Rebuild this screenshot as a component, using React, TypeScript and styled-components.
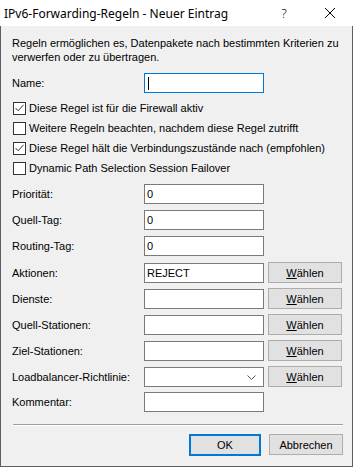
import styled, { createGlobalStyle } from "styled-components";

const GlobalStyle = createGlobalStyle`
  html, body {
    margin: 0;
    padding: 0;
    background: #f0f0f0;
  }
  * {
    box-sizing: border-box;
  }
`;

const StyledWindow = styled.div`
  width: 353px;
  height: 467px;
  display: flex;
  flex-direction: column;
  background: #f0f0f0;
  border: 1px solid #5f5f5f;
  border-top: none;
  font-family: "Liberation Sans", Arial, sans-serif;
  font-size: 11px;
  color: #000;
`;

const StyledTitleBar = styled.div`
  height: 26px;
  flex: 0 0 26px;
  display: flex;
  align-items: center;
  background: #fff;
  margin: 0 -1px;
`;

const StyledTitle = styled.div`
  flex: 1;
  padding-left: 4px;
  font-family: "Noto Sans", "Liberation Sans", sans-serif;
  font-size: 12px;
  white-space: nowrap;
`;

const StyledCaptionButton = styled.div`
  width: 46px;
  height: 26px;
  display: flex;
  align-items: center;
  justify-content: center;
  font-family: "Noto Sans", sans-serif;
  font-weight: 300;
  font-size: 13px;

  svg {
    width: 10px;
    height: 10px;
  }
`;

const StyledBody = styled.div`
  flex: 1;
  display: flex;
  flex-direction: column;
  padding: 10px 10px 0 11px;
`;

const StyledIntro = styled.p`
  margin: 0;
  line-height: 14px;
`;

const StyledRow = styled.div<{ $top: number }>`
  display: grid;
  grid-template-columns: 128px 120px 74px;
  column-gap: 4px;
  align-items: center;
  height: 20px;
  margin-top: ${(p) => p.$top}px;
`;

const StyledLabel = styled.span`
  white-space: nowrap;
`;

const StyledInput = styled.div<{ $focused?: boolean }>`
  height: 20px;
  display: flex;
  align-items: center;
  padding-left: 2px;
  background: #fff;
  border: 1px solid ${(p) => (p.$focused ? "#0078d7" : "#7a7a7a")};
  position: relative;
`;

const StyledCaret = styled.span`
  width: 1px;
  height: 13px;
  background: #000;
  margin-left: 1px;
`;

const StyledChevron = styled.svg`
  position: absolute;
  right: 7px;
  top: 7px;
  width: 9px;
  height: 5px;
`;

const StyledButton = styled.div<{ $default?: boolean }>`
  height: ${(p) => (p.$default ? 22 : 21)}px;
  display: flex;
  align-items: center;
  justify-content: center;
  background: #e1e1e1;
  border: ${(p) => (p.$default ? "2px solid #0078d7" : "1px solid #adadad")};
  white-space: nowrap;

  u {
    text-decoration: underline;
  }
`;

const StyledCheckRow = styled.div<{ $top: number }>`
  display: flex;
  align-items: center;
  gap: 3px;
  height: 20px;
  padding-left: 1px;
  margin-top: ${(p) => p.$top}px;
`;

const StyledCheckbox = styled.span`
  width: 13px;
  height: 13px;
  flex: 0 0 13px;
  background: #fff;
  border: 1px solid #333;
  display: flex;
  align-items: center;
  justify-content: center;

  svg {
    width: 9px;
    height: 8px;
  }
`;

const StyledSeparator = styled.div`
  margin-top: 12px;
  margin-left: 1px;
  width: 330px;
  border-top: 1px solid #a0a0a0;
  border-bottom: 1px solid #fff;
`;

const StyledFooter = styled.div`
  display: grid;
  grid-template-columns: 72px 74px;
  column-gap: 8px;
  justify-content: end;
  align-items: start;
  width: 331px;
  margin-top: 8px;
`;

const CheckItem = ({ label, checked }: { label: string; checked?: boolean }) => (
  <>
    <StyledCheckbox>
      {checked && (
        <svg viewBox="0 0 9 8">
          <path d="M0.5 4 L3.2 6.8 L8.5 0.8" fill="none" stroke="#333" strokeWidth="1" />
        </svg>
      )}
    </StyledCheckbox>
    <span>{label}</span>
  </>
);

const checks = [
  { label: "Diese Regel ist für die Firewall aktiv", checked: true },
  { label: "Weitere Regeln beachten, nachdem diese Regel zutrifft", checked: false },
  { label: "Diese Regel hält die Verbindungszustände nach (empfohlen)", checked: true },
  { label: "Dynamic Path Selection Session Failover", checked: false },
];

const fields = [
  { label: "Priorität:", value: "0" },
  { label: "Quell-Tag:", value: "0" },
  { label: "Routing-Tag:", value: "0" },
  { label: "Aktionen:", value: "REJECT", pick: true },
  { label: "Dienste:", value: "", pick: true },
  { label: "Quell-Stationen:", value: "", pick: true },
  { label: "Ziel-Stationen:", value: "", pick: true },
  { label: "Loadbalancer-Richtlinie:", value: "", pick: true, combo: true },
  { label: "Kommentar:", value: "" },
];

export default function App() {
  return (
    <>
      <GlobalStyle />
      <StyledWindow>
        <StyledTitleBar>
          <StyledTitle>IPv6-Forwarding-Regeln - Neuer Eintrag</StyledTitle>
          <StyledCaptionButton>?</StyledCaptionButton>
          <StyledCaptionButton>
            <svg viewBox="0 0 10 10">
              <path d="M0 0 L10 10 M10 0 L0 10" stroke="#000" strokeWidth="1" />
            </svg>
          </StyledCaptionButton>
        </StyledTitleBar>
        <StyledBody>
          <StyledIntro>
            Regeln ermöglichen es, Datenpakete nach bestimmten Kriterien zu
            <br />
            verwerfen oder zu übertragen.
          </StyledIntro>

          <StyledRow $top={9}>
            <StyledLabel>Name:</StyledLabel>
            <StyledInput $focused>
              <StyledCaret />
            </StyledInput>
          </StyledRow>

          {checks.map((c, i) => (
            <StyledCheckRow key={c.label} $top={i === 0 ? 5 : 0}>
              <CheckItem label={c.label} checked={c.checked} />
            </StyledCheckRow>
          ))}

          {fields.map((f) => (
            <StyledRow key={f.label} $top={6}>
              <StyledLabel>{f.label}</StyledLabel>
              <StyledInput>
                {f.value}
                {f.combo && (
                  <StyledChevron viewBox="0 0 9 5">
                    <path d="M0.5 0.5 L4.5 4.5 L8.5 0.5" fill="none" stroke="#555" strokeWidth="1" />
                  </StyledChevron>
                )}
              </StyledInput>
              {f.pick && (
                <StyledButton>
                  <span>
                    <u>W</u>ählen
                  </span>
                </StyledButton>
              )}
            </StyledRow>
          ))}

          <StyledSeparator />
          <StyledFooter>
            <StyledButton $default>OK</StyledButton>
            <StyledButton>Abbrechen</StyledButton>
          </StyledFooter>
        </StyledBody>
      </StyledWindow>
    </>
  );
}
